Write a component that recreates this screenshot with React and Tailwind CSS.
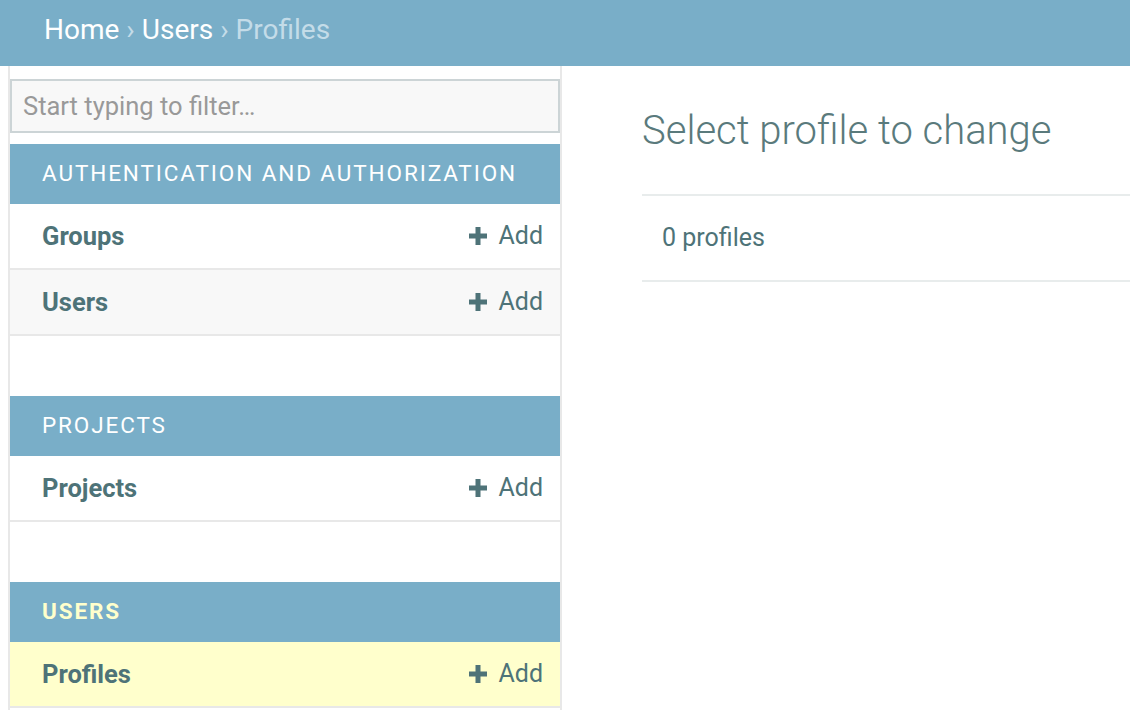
import React from "react";

function Plus() {
  return (
    <svg width="18" height="18" viewBox="0 0 18 18" className="mr-[11px]">
      <rect x="6.5" y="0" width="5" height="18" fill="#4e7378" />
      <rect x="0" y="6.5" width="18" height="5" fill="#4e7378" />
    </svg>
  );
}

function Row({ name, bg = "bg-white" }) {
  return (
    <div className={`flex h-[66px] items-center justify-between pl-[32px] pr-[17px] ${bg} border-b-2 border-[#e8e8e8]`}>
      <span className="text-[25.5px] font-bold text-[#4e7378]">{name}</span>
      <span className="flex items-center text-[25px] text-[#4e7378]">
        <Plus />
        Add
      </span>
    </div>
  );
}

function Section({ title, current = false }) {
  return (
    <div className="flex h-[60px] items-center bg-[#79aec8] pl-[32px]">
      <span className={`text-[22.5px] uppercase tracking-[1.9px] ${current ? "font-bold text-[#ffffcc]" : "text-white"}`}>{title}</span>
    </div>
  );
}

export default function App() {
  return (
    <div className="h-[710px] w-[1130px] overflow-hidden bg-white" style={{ fontFamily: "Roboto, 'Liberation Sans', sans-serif" }}>
      <div className="flex h-[66px] items-center bg-[#79aec8] pb-[6px] pl-[44px] text-[28px] text-white">
        <span>Home</span>
        <span className="mx-[7px] text-[#c4dce8]">›</span>
        <span>Users</span>
        <span className="mx-[7px] text-[#c4dce8]">›</span>
        <span className="text-[#c4dce8]">Profiles</span>
      </div>
      <div className="flex">
        <div className="ml-[8px] h-[660px] w-[554px] shrink-0 border-x-2 border-[#e8e8e8] pt-[13px]">
          <div className="flex h-[54px] items-center border-2 border-[#ccd4d6] bg-[#f8f8f8] pl-[11px] text-[25.5px] text-[#999]">
            Start typing to filter…
          </div>
          <div className="mt-[11px]">
            <Section title="Authentication and Authorization" />
            <Row name="Groups" />
            <Row name="Users" bg="bg-[#f8f8f8]" />
          </div>
          <div className="mt-[60px]">
            <Section title="Projects" />
            <Row name="Projects" />
          </div>
          <div className="mt-[60px]">
            <Section title="Users" current />
            <Row name="Profiles" bg="bg-[#ffffcc]" />
          </div>
        </div>
        <div className="flex-1 pl-[80px]">
          <h1 className="mt-[37px] text-[40px] font-light leading-[56px] text-[#5a7a7c]">Select profile to change</h1>
          <div className="mt-[35px] flex h-[88px] items-center border-y-2 border-[#e8ecec] pl-[20px] text-[25px] text-[#4e7378]">
            0 profiles
          </div>
        </div>
      </div>
    </div>
  );
}
